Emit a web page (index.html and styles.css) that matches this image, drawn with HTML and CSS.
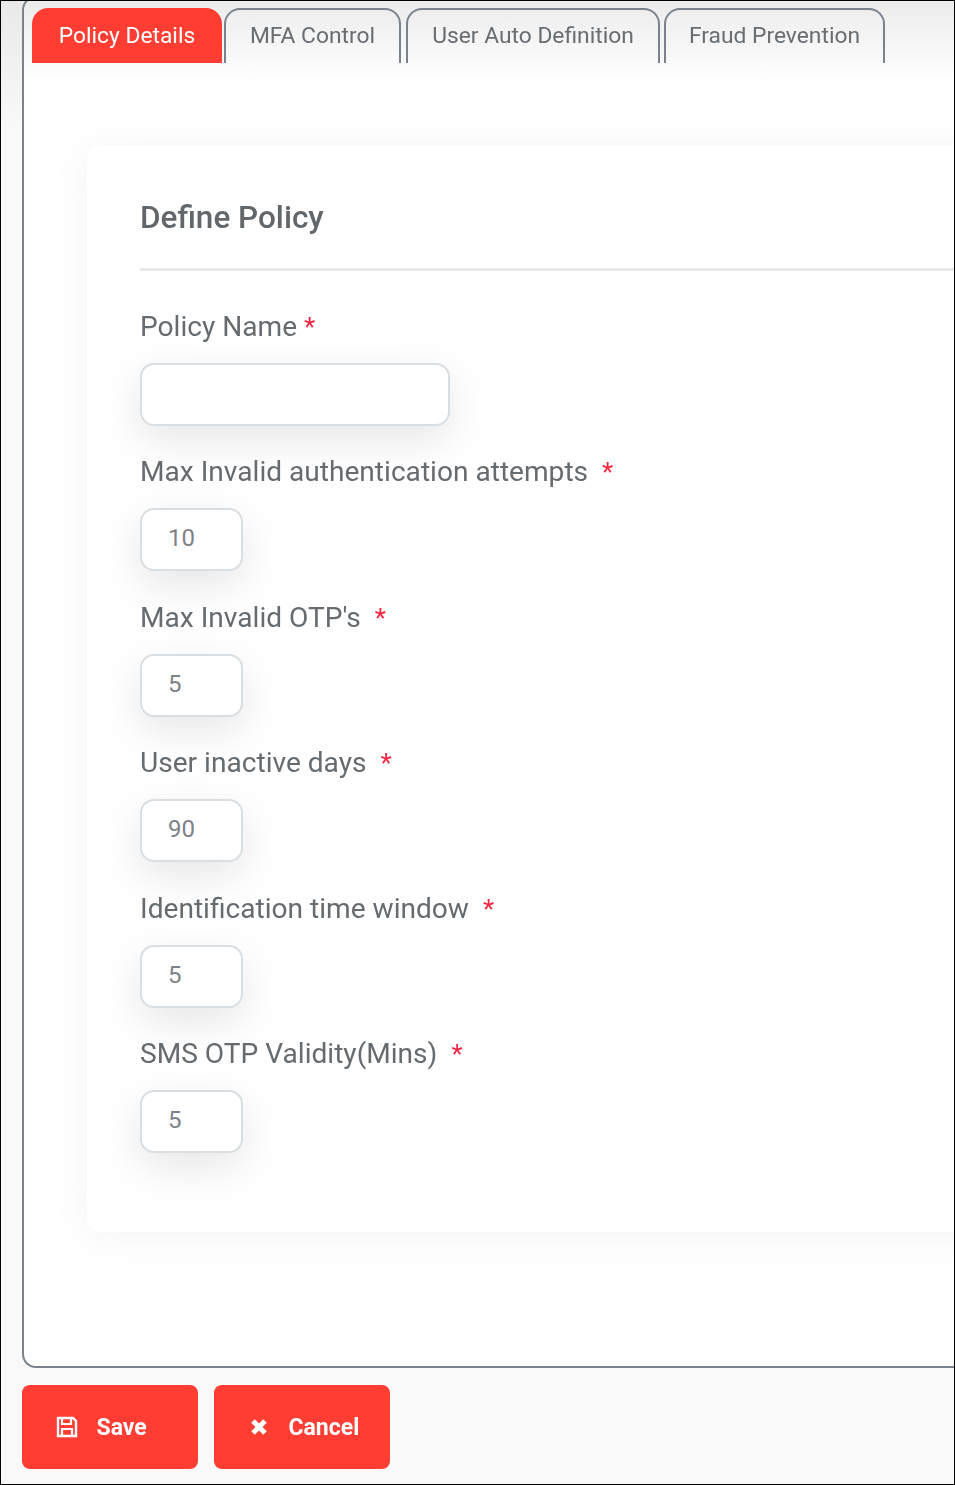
FILE: index.html
```html
<!DOCTYPE html>
<html lang="en">
<head>
<meta charset="utf-8">
<title>Policy</title>
<link rel="stylesheet" href="styles.css">
</head>
<body>
<div class="frame">
  <main class="panel">
    <nav class="tabs">
      <a class="tab tab-active tab-policy"><span class="soft">Policy Details</span></a>
      <a class="tab tab-mfa"><span class="soft">MFA Control</span></a>
      <a class="tab tab-user"><span class="soft">User Auto Definition</span></a>
      <a class="tab tab-fraud"><span class="soft">Fraud Prevention</span></a>
    </nav>
    <section class="card">
      <h2 class="card-title"><span class="soft">Define Policy</span></h2>
      <form class="fields">
        <div class="field">
          <label class="label soft">Policy Name<span class="req req-tight">*</span></label>
          <input class="input input-wide" type="text">
        </div>
        <div class="field">
          <label class="label soft">Max Invalid authentication attempts<span class="req">*</span></label>
          <input class="input input-small" type="text" value="10">
        </div>
        <div class="field">
          <label class="label soft">Max Invalid OTP's<span class="req">*</span></label>
          <input class="input input-small" type="text" value="5">
        </div>
        <div class="field">
          <label class="label soft">User inactive days<span class="req">*</span></label>
          <input class="input input-small" type="text" value="90">
        </div>
        <div class="field">
          <label class="label soft">Identification time window<span class="req">*</span></label>
          <input class="input input-small" type="text" value="5">
        </div>
        <div class="field">
          <label class="label soft">SMS OTP Validity(Mins)<span class="req">*</span></label>
          <input class="input input-small" type="text" value="5">
        </div>
      </form>
    </section>
  </main>
  <footer class="actions">
    <button class="btn" type="button">
      <span class="btn-slot">
        <svg class="btn-icon" viewBox="0 0 22 22" aria-hidden="true">
          <path d="M2 2h15l3 3v15H2z" fill="none" stroke="currentColor" stroke-width="2.4"/>
          <path d="M6 2v6h9V2M6 20v-7h10v7" fill="none" stroke="currentColor" stroke-width="2.2"/>
        </svg>
      </span>
      <span class="soft">Save</span>
    </button>
    <button class="btn btn-cancel" type="button">
      <span class="btn-slot">
        <svg class="btn-icon btn-icon-x" viewBox="0 0 18 18" aria-hidden="true">
          <path d="M3 3l12 12M15 3L3 15" fill="none" stroke="currentColor" stroke-width="5"/>
        </svg>
      </span>
      <span class="soft">Cancel</span>
    </button>
  </footer>
</div>
</body>
</html>
```
FILE: styles.css
```css
* { box-sizing: border-box; }
html, body { margin: 0; padding: 0; }
body { width: 955px; height: 1485px; font-family: Roboto, "Liberation Sans", sans-serif; color: #666b70; }
.soft { filter: blur(.4px); }
.frame {
  width: 955px; height: 1485px; overflow: hidden; border: 1px solid #000;
  background: linear-gradient(#e9e9e9 0, #f9f9f9 130px);
  padding-left: 21px;
}
.panel {
  margin-top: -5px; width: 1000px; height: 1372px;
  border: 2px solid #78838f; border-radius: 14px;
  background: linear-gradient(#ebebeb 0, #ffffff 85px);
  padding: 10px 0 0 8px;
}
.tabs { display: flex; height: 55px; }
.tab {
  display: flex; align-items: center; justify-content: center;
  height: 55px; padding-bottom: 2px; font-size: 22.8px; color: #686d72;
  border: 2.4px solid #78838f; border-bottom: 0; border-radius: 16px 16px 0 0;
}
.tab-active { background: #ff3d33; border-color: #ff3d33; color: #fff; }
.tab-policy { width: 190px; }
.tab-mfa { width: 177px; margin-left: 2px; }
.tab-user { width: 254px; margin-left: 5px; }
.tab-fraud { width: 221px; margin-left: 4px; }
.card {
  margin: 82px 0 0 55px; width: 1000px; height: 1087px;
  background: #fff; border-radius: 14px; padding: 0 0 0 53px;
  box-shadow: 0 4px 42px rgba(0,0,0,.05);
}
.card-title {
  margin: 0 0 32px; width: 830px; height: 126px; padding: 51px 0 0;
  font-size: 31.5px; font-weight: 500; line-height: 44px;
  border-bottom: 3px solid #e8e8e8; color: #62676c;
}
.fields { display: flex; flex-direction: column; gap: 0; }
.field { height: 145.4px; display: flex; flex-direction: column; align-items: flex-start; }
.label { display: block; height: 60px; font-size: 28.1px; line-height: 48px; color: #666b70; }
.req { color: #f9243f; margin-left: 14px; font-size: 26px; }
.req-tight { margin-left: 7px; }
.input {
  display: block; height: 63px; border: 2px solid #d9dee2; border-radius: 14px;
  background: #fff; font: 24px Roboto, sans-serif; color: #7d8288; padding: 0 26px 3px; outline: 0;
  box-shadow: 0 14px 44px rgba(0,0,0,.1);
}
.input-wide { width: 310px; }
.input-small { width: 103px; }
.actions { display: flex; gap: 16px; margin-top: 17px; }
.btn {
  display: flex; align-items: center; justify-content: flex-start; gap: 18.5px;
  width: 176px; height: 84px; border: 0; border-radius: 8px;
  background: #ff3d33; color: #fff; font: 700 23px Roboto, sans-serif; padding: 0 0 0 34px;
}
.btn-slot { display: flex; align-items: center; justify-content: center; width: 22px; height: 22px; }
.btn-icon { width: 22px; height: 22px; display: block; }
.btn-icon-x { width: 18px; height: 18px; }
```
